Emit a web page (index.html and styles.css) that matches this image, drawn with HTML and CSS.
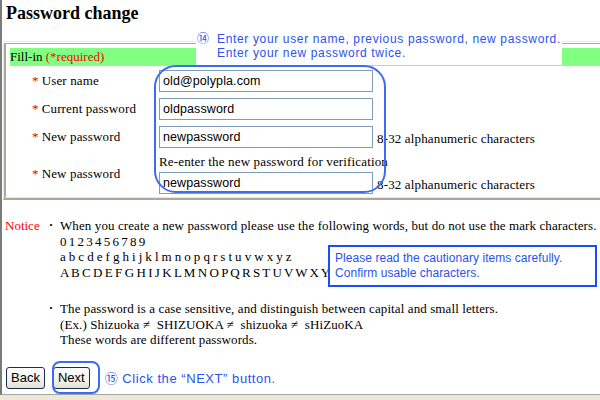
FILE: index.html
```html
<!DOCTYPE html>
<html>
<head>
<meta charset="utf-8">
<link rel="stylesheet" href="styles.css">
</head>
<body>
<div class="page">
  <h1 class="title">Password change</h1>

  <div class="frame">
    <div class="frame-in">
      <div class="fill-bar">Fill-in <span class="req">(*required)</span></div>
      <div class="form-grid">
        <div class="label"><span class="ast">*</span> User name</div>
        <div class="field"><div class="input">old@polypla.com</div></div>
        <div class="hint"></div>

        <div class="label"><span class="ast">*</span> Current password</div>
        <div class="field"><div class="input">oldpassword</div></div>
        <div class="hint"></div>

        <div class="label"><span class="ast">*</span> New password</div>
        <div class="field"><div class="input">newpassword</div></div>
        <div class="hint">8-32 alphanumeric characters</div>

        <div class="label label-tall"><span class="ast">*</span> New password</div>
        <div class="field field-tall">
          <div class="reenter">Re-enter the new password for verification</div>
          <div class="input">newpassword</div>
        </div>
        <div class="hint hint-tall">8-32 alphanumeric characters</div>
      </div>
    </div>
  </div>

  <div class="notice">
    <div class="notice-label">Notice</div>
    <div class="bullet">・</div>
    <div class="notice-text">
      <div>When you create a new password please use the following words, but do not use the mark characters.</div>
      <div class="chars-digits">0 1 2 3 4 5 6 7 8 9</div>
      <div class="chars-lower">a b c d e f g h i j k l m n o p q r s t u v w x y z</div>
      <div class="chars-upper">A B C D E F G H I J K L M N O P Q R S T U V W X Y Z</div>
    </div>
    <div class="notice-label"></div>
    <div class="bullet bullet-2">・</div>
    <div class="notice-text notice-text-2">
      <div>The password is a case sensitive, and distinguish between capital and small letters.</div>
      <div>(Ex.) Shizuoka ≠&nbsp; SHIZUOKA ≠&nbsp; shizuoka ≠&nbsp; sHiZuoKA</div>
      <div>These words are different passwords.</div>
    </div>
  </div>

  <div class="actions">
    <button class="btn">Back</button>
    <button class="btn btn-next">Next</button>
    <span class="step-note"><span class="num">⑮</span> Click the “NEXT” button.</span>
  </div>

  <div class="callout-top">
    <div class="ct-line"><span class="num">⑭</span>Enter your user name, previous password, new password.</div>
    <div class="ct-line ct-indent">Enter your new password twice.</div>
  </div>
  <div class="ring-form"></div>
  <div class="ring-next"></div>
  <div class="callout-box">
    <div>Please read the cautionary items carefully.</div>
    <div>Confirm usable characters.</div>
  </div>
</div>
</body>
</html>
```

FILE: styles.css
```css
html, body {
  margin: 0;
  padding: 0;
}
body {
  background: #ece9d8;
  font-family: "Liberation Serif", "Times New Roman", serif;
  font-size: 13px;
  color: #000;
}
.page {
  position: relative;
  height: 394px;
  background: #fff;
  border-left: 2px solid #7a7a7a;
  border-bottom: 1px solid #a6a6a6;
  overflow: hidden;
}
.title {
  margin: 2px 0 0 4px;
  font-size: 18px;
  line-height: 22px;
  font-weight: bold;
}
.frame {
  margin: 17px 0 0 1px;
  border-top: 1px solid #ece9d8;
  border-left: 1px solid #ece9d8;
  border-bottom: 2px solid #aca899;
  padding-top: 1px;
}
.frame-in {
  border-top: 1px solid #aca899;
  border-left: 2px solid #aca899;
  border-bottom: 1px solid #ece9d8;
  padding: 4px 0 3px 4px;
}
.fill-bar {
  background: #80ff80;
  height: 18px;
  line-height: 18px;
}
.req {
  color: #ff0000;
}
.form-grid {
  display: grid;
  grid-template-columns: 127px 214px 1fr;
  row-gap: 6px;
  margin: 4px 0 0 22px;
  letter-spacing: 0.15px;
}
.label {
  display: flex;
  align-items: center;
  height: 22px;
}
.label-tall {
  height: auto;
}
.ast {
  color: #e00000;
  margin-right: 3px;
}
.input {
  box-sizing: border-box;
  height: 22px;
  border: 1px solid #7f9db9;
  font-family: "Liberation Sans", Arial, sans-serif;
  font-size: 12.5px;
  letter-spacing: 0.1px;
  line-height: 20px;
  padding-left: 3px;
  background: #fff;
}
.reenter {
  line-height: 16px;
  margin-bottom: 2px;
  white-space: nowrap;
}
.hint {
  padding-left: 4px;
  display: flex;
  align-items: flex-end;
  line-height: 18px;
  white-space: nowrap;
}
.notice {
  display: grid;
  grid-template-columns: 41px 14px 1fr;
  margin: 18px 0 0 3px;
  line-height: 15.5px;
}
.notice-label {
  color: #ff0000;
}
.bullet {
  font-family: "Noto Sans CJK JP", sans-serif;
  font-size: 10px;
  line-height: 13px;
}
.bullet-2 {
  margin-top: 21px;
}
.notice-text {
  white-space: nowrap;
  letter-spacing: 0.1px;
}
.notice-text-2 {
  margin-top: 21px;
}
.chars-digits {
  letter-spacing: -0.5px;
}
.chars-lower {
  letter-spacing: -0.1px;
}
.chars-upper {
  letter-spacing: -0.45px;
}
.actions {
  display: flex;
  align-items: center;
  margin: 19px 0 0 4px;
}
.btn {
  box-sizing: border-box;
  height: 22px;
  padding: 0 4px;
  font-family: "Liberation Sans", Arial, sans-serif;
  font-size: 13px;
  color: #000;
  border: 1px solid #1c2f4a;
  border-radius: 3px;
  background: linear-gradient(#ffffff, #f2f1ea 60%, #e3e1d6);
  margin-right: 8px;
}
.btn-next {
  margin-right: 15px;
}
.step-note {
  font-family: "Liberation Sans", Arial, "Noto Sans CJK JP", sans-serif;
  font-size: 13px;
  line-height: 16px;
  color: #2b52ee;
  letter-spacing: 0.55px;
  margin-top: 2px;
}
.num {
  font-family: "Noto Sans CJK JP", sans-serif;
  font-size: 13px;
  line-height: 12px;
}
.callout-top {
  position: absolute;
  left: 194px;
  top: 30px;
  width: 366px;
  height: 35px;
  background: #fff;
  padding: 2px 0 0 1px;
  box-sizing: border-box;
  font-family: "Liberation Sans", Arial, sans-serif;
  font-size: 12px;
  line-height: 14px;
  color: #2b52ee;
  letter-spacing: 0.65px;
  white-space: nowrap;
}
.ct-line {
  height: 14px;
}
.callout-top .num {
  display: inline-block;
  width: 20px;
  font-size: 12px;
  letter-spacing: 0;
}
.ct-indent {
  padding-left: 20px;
}
.ring-form {
  position: absolute;
  left: 152px;
  top: 65px;
  width: 228px;
  height: 124px;
  border: 2px solid #3c6cf4;
  border-radius: 22px;
}
.ring-next {
  position: absolute;
  left: 50px;
  top: 361px;
  width: 44px;
  height: 29px;
  border: 2px solid #3c6cf4;
  border-radius: 8px;
}
.callout-box {
  position: absolute;
  left: 326px;
  top: 245px;
  width: 269px;
  height: 42px;
  box-sizing: border-box;
  border: 2px solid #1a4cff;
  background: #fff;
  padding: 4px 0 0 5px;
  font-family: "Liberation Sans", Arial, sans-serif;
  font-size: 12px;
  line-height: 15px;
  letter-spacing: 0.05px;
  color: #2b52ee;
  white-space: nowrap;
}
```
